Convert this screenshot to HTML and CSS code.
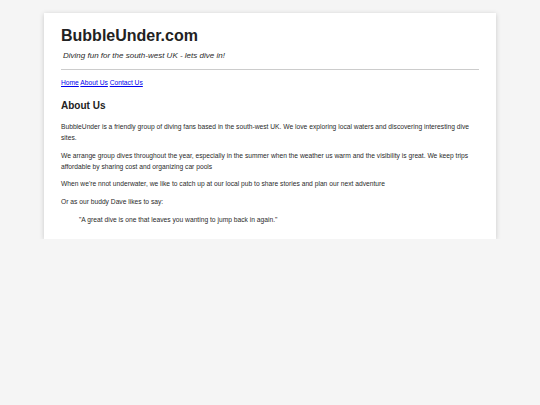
FILE: index.html
```html
<!DOCTYPE html>
<html lang="en">
<head>
  <meta charset="UTF-8">
  <title>BubbleUnder.com - About Us</title>
  <link rel="stylesheet" href="styles.css">
</head>
<body>
  <div class="wrapper">
    <header>
      <h1>BubbleUnder.com</h1>
      <p class="tagline">Diving fun for the south-west UK - lets dive in!</p>
    </header>
    <nav>
      <a href="index.html">Home</a>
      <a href="about.html">About Us</a>
      <a href="contact.html">Contact Us</a>
    </nav>
    <h2>About Us</h2>
    <p>BubbleUnder is a friendly group of diving fans based in the south-west UK. We love exploring local waters and discovering interesting dive sites.</p>
    <p>We arrange group dives throughout the year, especially in the summer when the weather us warm and the visibility is great. We keep trips affordable by sharing cost and organizing car pools</p>
    <p>When we're nnot underwater, we like to catch up at our local pub to share stories and plan our next adventure</p>
    <p>Or as our buddy Dave likes to say:</p>
    <blockquote>"A great dive is one that leaves you wanting to jump back in again."</blockquote>
  </div>
</body>
</html>
```

FILE: styles.css
```css
body {font-family:"Liberation Sans", Arial, sans-serif; background:#f5f5f5; margin:0; padding-top:13px; color:#2a2a2a; font-size:6.7px; line-height:11px;}
.wrapper {width:418px; margin:0 auto; background:white; padding:14px 17px 7px; box-shadow:0 1px 5px rgba(0,0,0,0.18);}
header {border-bottom:1px solid #ccc; padding-bottom:8px;}
h1 {font-size:16px; line-height:18px; margin:0; color:#222;}
.tagline {font-size:8px; line-height:10px; font-style:italic; margin:6px 0 0 2px;}
nav {margin-top:9px; line-height:8px;}
nav a {color:#00e;}
h2 {font-size:10px; line-height:12px; margin:13px 0 9px; color:#222;}
p {margin:0 0 6.7px;}
blockquote {margin:0 0 7px 18px;}
```
